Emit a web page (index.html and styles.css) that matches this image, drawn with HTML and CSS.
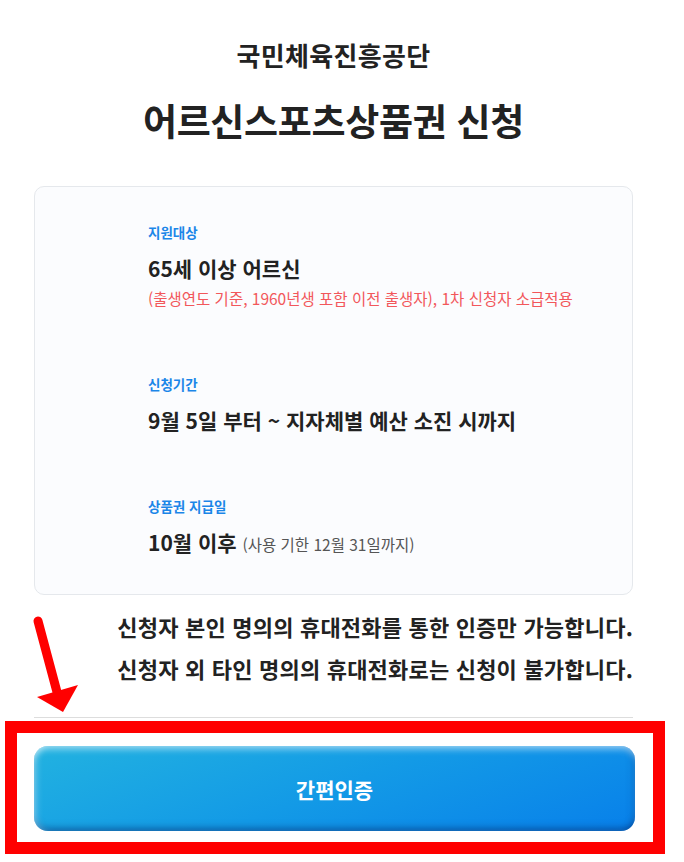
FILE: index.html
```html
<!DOCTYPE html>
<html lang="ko">
<head>
    <meta charset="UTF-8">
    <meta name="viewport" content="width=device-width, initial-scale=1.0">
    <title>어르신스포츠상품권 신청</title>
    <link rel="stylesheet" href="styles.css">
</head>
<body>
    <div class="page">
        <header class="header">
            <p class="org">국민체육진흥공단</p>
            <h1 class="title">어르신스포츠상품권 신청</h1>
        </header>

        <section class="card">
            <div class="item item-first">
                <p class="item-label">지원대상</p>
                <p class="item-value">65세 이상 어르신</p>
                <p class="item-note">(출생연도 기준, 1960년생 포함 이전 출생자), 1차 신청자 소급적용</p>
            </div>
            <div class="item">
                <p class="item-label">신청기간</p>
                <p class="item-value">9월 5일 부터 ~ 지자체별 예산 소진 시까지</p>
            </div>
            <div class="item">
                <p class="item-label">상품권 지급일</p>
                <p class="item-value">10월 이후 <span class="item-sub">(사용 기한 12월 31일까지)</span></p>
            </div>
        </section>

        <div class="notice">
            <p>신청자 본인 명의의 휴대전화를 통한 인증만 가능합니다.</p>
            <p>신청자 외 타인 명의의 휴대전화로는 신청이 불가합니다.</p>
        </div>

        <hr class="divider">

        <button type="button" class="auth-btn">간편인증</button>
    </div>

    <!-- 안내용 표시 (화살표 / 강조 박스) -->
    <svg class="mark-arrow" width="100" height="130" viewBox="0 600 100 130">
        <line x1="38" y1="621" x2="57" y2="692" stroke="#ff0000" stroke-width="9" stroke-linecap="round"/>
        <polygon points="37,697 78,685 63,712" fill="#ff0000"/>
    </svg>
    <div class="mark-box"></div>
</body>
</html>
```

FILE: styles.css
```css
:root {
    --text-color: #222222;
    --label-color: #1b86e8;
    --note-color: #f2575b;
    --sub-color: #555555;
    --card-bg: #fbfcfe;
    --card-border: #e5e8ec;
    --mark-color: #ff0000;
}

* {
    box-sizing: border-box;
}

body {
    margin: 0;
    font-family: 'Noto Sans CJK KR', 'Noto Sans', sans-serif;
    color: var(--text-color);
    background-color: white;
}

p {
    margin: 0;
}

.page {
    width: 599px;
    margin-left: 34px;
    padding-top: 38px;
}

.header {
    text-align: center;
}

.org {
    font-size: 26px;
    line-height: 34px;
    font-weight: 700;
    letter-spacing: 0.3px;
}

.title {
    margin: 24px 0 0;
    font-size: 37px;
    line-height: 48px;
    font-weight: 700;
    letter-spacing: -0.3px;
}

.card {
    margin-top: 42px;
    padding: 35px 20px 36px 113px;
    background-color: var(--card-bg);
    border: 1px solid var(--card-border);
    border-radius: 10px;
}

.item + .item {
    margin-top: 62px;
}

.item-first {
    padding-bottom: 2px;
}

.item-label {
    font-size: 13.5px;
    line-height: 20px;
    font-weight: 700;
    color: var(--label-color);
}

.item-value {
    margin-top: 12px;
    font-size: 21px;
    line-height: 28px;
    font-weight: 700;
}

.item-note {
    margin-top: 4px;
    font-size: 15.5px;
    line-height: 24px;
    color: var(--note-color);
}

.item-sub {
    font-size: 15.5px;
    font-weight: 400;
    color: var(--sub-color);
}

.notice {
    margin-top: 10px;
    text-align: right;
    font-size: 22px;
    line-height: 42px;
    font-weight: 700;
    letter-spacing: 0.2px;
}

.divider {
    margin: 28px 0 0;
    border: none;
    border-top: 1px solid #dddddd;
}

.auth-btn {
    display: block;
    width: 601px;
    height: 85px;
    margin-top: 28px;
    border: none;
    border-radius: 14px;
    font-family: inherit;
    font-size: 21px;
    font-weight: 700;
    color: white;
    cursor: pointer;
    background: linear-gradient(160deg, #22b2e0 0%, #139ae6 50%, #0880ea 100%);
    box-shadow:
        inset 0 7px 7px -4px rgba(255, 255, 255, 0.55),
        inset 6px 0 7px -4px rgba(255, 255, 255, 0.4),
        inset 0 -7px 7px -4px rgba(0, 50, 120, 0.55),
        inset -6px 0 7px -4px rgba(0, 50, 120, 0.25);
}

.mark-arrow {
    position: absolute;
    left: 0;
    top: 600px;
}

.mark-box {
    position: absolute;
    left: 5px;
    top: 721px;
    width: 660px;
    height: 133px;
    border: 12px solid var(--mark-color);
    pointer-events: none;
}
```
